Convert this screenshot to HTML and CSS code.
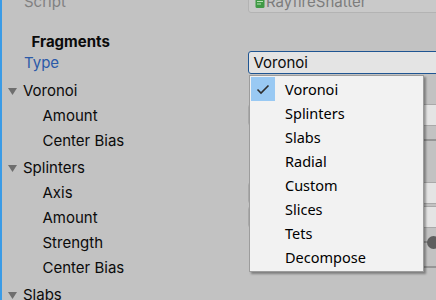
FILE: index.html
```html
<!DOCTYPE html>
<html>
<head>
<meta charset="utf-8">
<link rel="stylesheet" href="styles.css">
</head>
<body>
<div class="page">
  <div class="inspector">
    <div class="row">
      <div class="label muted">Script</div>
      <div class="value">
        <div class="objfield">
          <svg class="script-icon" viewBox="0 0 10 12" width="10" height="12"><rect x="0.5" y="0" width="9" height="12" rx="1.5" fill="#3f9a45"/><path d="M2 3h6M2 5.5h6M2 8h4" stroke="#b9e3b6" stroke-width="1"/></svg>
          <span>RayfireShatter</span>
        </div>
      </div>
    </div>
    <div class="header">Fragments</div>
    <div class="row row-type">
      <div class="label focused">Type</div>
      <div class="value"><div class="popup">Voronoi</div></div>
    </div>
    <div class="foldout"><svg class="tri" viewBox="0 0 9 7" width="9" height="7"><path d="M0 0h9L4.5 7z" fill="#6e6e6e"/></svg><span>Voronoi</span></div>
    <div class="row">
      <div class="label sub">Amount</div>
      <div class="value"><div class="field"></div></div>
    </div>
    <div class="row">
      <div class="label sub">Center Bias</div>
      <div class="value"><div class="slider"></div></div>
    </div>
    <div class="foldout"><svg class="tri" viewBox="0 0 9 7" width="9" height="7"><path d="M0 0h9L4.5 7z" fill="#6e6e6e"/></svg><span>Splinters</span></div>
    <div class="row">
      <div class="label sub">Axis</div>
      <div class="value"><div class="field"></div></div>
    </div>
    <div class="row">
      <div class="label sub">Amount</div>
      <div class="value"><div class="field"></div></div>
    </div>
    <div class="row">
      <div class="label sub">Strength</div>
      <div class="value"><div class="slider"><div class="knob"></div></div></div>
    </div>
    <div class="row">
      <div class="label sub">Center Bias</div>
      <div class="value"><div class="slider"></div></div>
    </div>
    <div class="foldout"><svg class="tri" viewBox="0 0 9 7" width="9" height="7"><path d="M0 0h9L4.5 7z" fill="#6e6e6e"/></svg><span>Slabs</span></div>
  </div>

  <div class="dropdown">
    <div class="item selected"><span class="gutter"><svg viewBox="0 0 24 24" width="24" height="24"><path d="M6.5 12.5l3.5 3.5 7.5-7.5" fill="none" stroke="#2e2e2e" stroke-width="1.6"/></svg></span><span class="text">Voronoi</span></div>
    <div class="item"><span class="gutter"></span><span class="text">Splinters</span></div>
    <div class="item"><span class="gutter"></span><span class="text">Slabs</span></div>
    <div class="item"><span class="gutter"></span><span class="text">Radial</span></div>
    <div class="item"><span class="gutter"></span><span class="text">Custom</span></div>
    <div class="item"><span class="gutter"></span><span class="text">Slices</span></div>
    <div class="item"><span class="gutter"></span><span class="text">Tets</span></div>
    <div class="item"><span class="gutter"></span><span class="text">Decompose</span></div>
  </div>
</div>
</body>
</html>
```

FILE: styles.css
```css
* { box-sizing: border-box; }

body {
  margin: 0;
  background: #c2c2c2;
  font-family: Inter, "Noto Sans", sans-serif;
  font-size: 15px;
  color: #0b0b0b;
}

.page {
  position: relative;
  height: 300px;
  border-left: 2px solid #3a9be6;
  overflow: hidden;
}

.inspector {
  margin-top: -10.9px;
}

.row {
  display: grid;
  grid-template-columns: 246px 200px;
  height: 24.8px;
  align-items: center;
}

.label {
  padding-left: 22px;
  padding-top: 2px;
  white-space: nowrap;
  line-height: 22.8px;
}

.label.sub { padding-left: 40.5px; }
.muted { color: #808080; }
.focused { color: #2b5aa8; }

.header {
  height: 18px;
  line-height: 16px;
  padding-top: 2px;
  margin-top: 18.4px;
  padding-left: 29.5px;
  font-weight: 700;
}

.foldout {
  height: 24.8px;
  margin-top: 3px;
  padding-top: 2px;
  display: flex;
  align-items: center;
  gap: 6px;
  padding-left: 6px;
  line-height: 22.8px;
}

.tri { flex: none; }

.field {
  height: 22px;
  background: #e4e4e4;
  border: 1px solid #a9a9a9;
  border-radius: 3px;
}

.popup {
  height: 23px;
  background: #e4e4e4;
  border: 1px solid #1f5592;
  border-radius: 3px;
  padding-left: 4.5px;
  line-height: 21px;
}

.objfield {
  height: 22px;
  background: #c9c9c9;
  border: 1px solid #b3b3b3;
  border-radius: 3px;
  display: flex;
  align-items: center;
  gap: 1px;
  padding-left: 6px;
  color: #7c7c7c;
  line-height: 20px;
}

.script-icon { flex: none; }

.slider {
  position: relative;
  height: 22px;
}

.slider::before {
  content: "";
  position: absolute;
  left: 4px;
  right: 0;
  top: 10px;
  height: 2px;
  background: #959595;
}

.knob {
  position: absolute;
  left: 178.5px;
  top: 4.5px;
  width: 13px;
  height: 13px;
  border-radius: 50%;
  background: #5e5e5e;
}

.dropdown {
  position: absolute;
  left: 247px;
  top: 75px;
  width: 175px;
  height: 197px;
  padding: 1px;
  background: #f2f2f2;
  border: 1px solid #9c9c9c;
  box-shadow: 2px 2px 2px rgba(0, 0, 0, 0.35);
  font-family: "Noto Sans", sans-serif;
  font-size: 14.5px;
  color: #000;
}

.item {
  height: 24px;
  display: flex;
  align-items: center;
}

.gutter {
  flex: none;
  width: 24px;
  height: 24px;
  display: block;
}

.item.selected .gutter { background: #99c9f3; }

.gutter svg { display: block; }

.text {
  margin-left: 10px;
  line-height: 24px;
}
```
